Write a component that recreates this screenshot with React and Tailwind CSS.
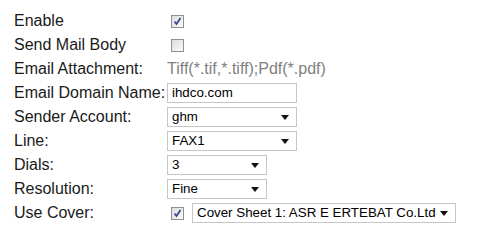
import React from 'react';

function Check({ checked }) {
  return (
    <span className="ml-[4px] inline-flex h-[13px] w-[13px] items-center justify-center border border-[#8e8f8f] bg-gradient-to-br from-[#dcdcdc] to-[#fbfbfb]">
      {checked && (
        <svg width="9" height="9" viewBox="0 0 9 9">
          <path d="M1.5 4.5 L3.5 7 L7.5 1" fill="none" stroke="#3b4a8c" strokeWidth="1.8" />
        </svg>
      )}
    </span>
  );
}

function Select({ value, width }) {
  return (
    <div className={`flex h-[20px] items-center justify-between border border-[#c6c6c6] bg-white pl-[4px] pr-[7px] text-[13.33px] text-black ${width}`}>
      <span>{value}</span>
      <svg width="8" height="5" viewBox="0 0 8 5">
        <path d="M0 0 H8 L4 5 Z" fill="#111" />
      </svg>
    </div>
  );
}

function Row({ label, children }) {
  return (
    <div className="flex h-[24px] items-center">
      <div className="w-[153px] shrink-0">{label}</div>
      <div className="flex items-center">{children}</div>
    </div>
  );
}

export default function App() {
  return (
    <div className="h-[240px] w-[488px] bg-white pl-[14px] pt-[9px] text-[16px] text-[#1a1a1a]" style={{ fontFamily: '"Liberation Sans", Arial, sans-serif' }}>
      <Row label="Enable"><Check checked /></Row>
      <Row label="Send Mail Body"><Check /></Row>
      <Row label="Email Attachment:"><span className="text-[#7f7f7f]">Tiff(*.tif,*.tiff);Pdf(*.pdf)</span></Row>
      <Row label="Email Domain Name:">
        <div className="flex h-[20px] w-[130px] items-center border border-[#c6c6c6] bg-white pl-[4px] text-[13.33px] text-black">ihdco.com</div>
      </Row>
      <Row label="Sender Account:"><Select value="ghm" width="w-[130px]" /></Row>
      <Row label="Line:"><Select value="FAX1" width="w-[130px]" /></Row>
      <Row label="Dials:"><Select value="3" width="w-[100px]" /></Row>
      <Row label="Resolution:"><Select value="Fine" width="w-[100px]" /></Row>
      <Row label="Use Cover:">
        <Check checked />
        <div className="ml-[8px]"><Select value="Cover Sheet 1: ASR E ERTEBAT Co.Ltd" width="w-[264px]" /></div>
      </Row>
    </div>
  );
}
